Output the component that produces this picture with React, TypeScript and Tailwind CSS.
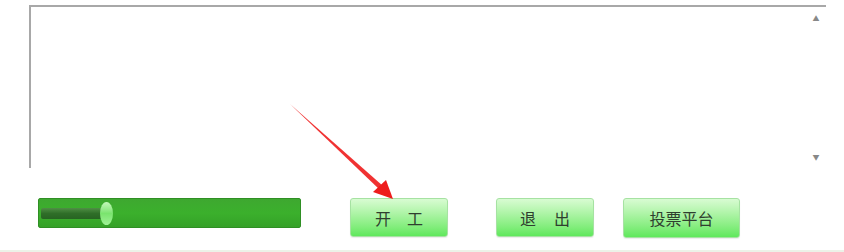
export default function App() {
  const font = { fontFamily: '"Noto Sans CJK SC", "Noto Sans", sans-serif' };
  const btn =
    "flex items-center justify-center rounded-[3px] border border-[#a6e2a2] bg-gradient-to-b from-[#d8fbd2] via-[#a0f299] to-[#5fe85c] text-[16px] font-normal text-[#2f3f2f] shadow-[0_1px_1px_rgba(0,0,0,0.08)]";
  return (
    <div className="relative flex h-[252px] w-[844px] flex-col bg-white" style={font}>
      {/* log box */}
      <div className="ml-[29px] mt-[5px] flex h-[163px] w-[797px] justify-end border-l-2 border-t-2 border-[#a8a8a8]">
        <div className="flex w-[20px] flex-col items-center justify-between pb-[7px] pt-[8px] text-[7px] leading-none text-[#888]">
          <span>▲</span>
          <span>▼</span>
        </div>
      </div>

      {/* controls */}
      <div className="mt-[30px] flex h-[40px] items-start">
        <div className="relative ml-[38px] h-[30px] w-[263px] rounded-[2px] border border-[#2f8f24] bg-gradient-to-b from-[#3ea830] via-[#3bb02c] to-[#35a128]">
          <div className="absolute left-[2px] top-[9px] h-[11px] w-[66px] rounded-l-[2px] bg-gradient-to-b from-[#4f8f45] via-[#2f6e28] to-[#276322]" />
          <div className="absolute left-[61px] top-[3px] h-[23px] w-[13px] rounded-[50%] bg-gradient-to-b from-[#c4f7bb] via-[#7ae46e] to-[#9ff296]" />
        </div>
        <div className={`${btn} ml-[49px] h-[39px] w-[98px] gap-[16px]`}>
          <span>开</span>
          <span>工</span>
        </div>
        <div className={`${btn} ml-[48px] h-[39px] w-[98px] gap-[18px]`}>
          <span>退</span>
          <span>出</span>
        </div>
        <div className={`${btn} ml-[29px] h-[40px] w-[117px]`}>
          <span>投票平台</span>
        </div>
      </div>

      <div className="mt-auto h-[2px] w-full bg-[#ecf2e8]" />

      {/* annotation arrow */}
      <svg className="pointer-events-none absolute left-0 top-0" width="844" height="252">
        <polygon points="290,104 383,186 380,190" fill="#ee1c1c" opacity="0.9" />
        <polygon points="393,199 373,192 386,180" fill="#ee1c1c" />
      </svg>
    </div>
  );
}
